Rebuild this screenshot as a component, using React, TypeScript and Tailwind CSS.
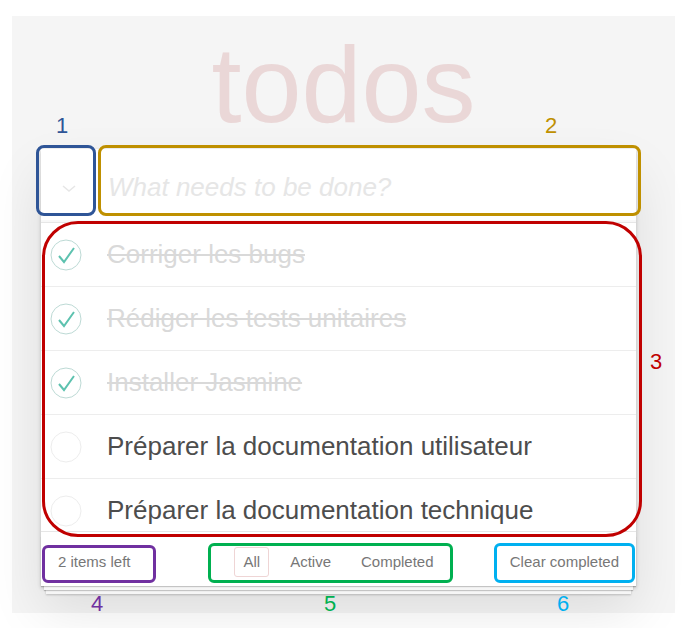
import React from 'react';

const todos = [
  { title: 'Corriger les bugs', done: true },
  { title: 'Rédiger les tests unitaires', done: true },
  { title: 'Installer Jasmine', done: true },
  { title: 'Préparer la documentation utilisateur', done: false },
  { title: 'Préparer la documentation technique', done: false },
];

const CheckCircle = ({ done }: { done: boolean }) => (
  <svg width="32" height="32" viewBox="0 0 32 32" className="shrink-0">
    <circle cx="16" cy="16" r="15" fill="none" stroke={done ? '#bddad5' : '#ededed'} strokeWidth="1" />
    {done && <polyline points="9,17 14,23 24,9" fill="none" stroke="#5dc2af" strokeWidth="2" />}
  </svg>
);

const App = () => {
  return (
    <div className="relative w-[686px] h-[628px] bg-white pt-[16px] pl-[12px] font-['Liberation_Sans',Arial,sans-serif]">
      <div className="w-[663px] h-[597px] bg-[#f5f5f5] pt-[15px]">
        <h1 className="text-center text-[108px] leading-none text-[#ead7d7] font-normal">todos</h1>

        <div className="ml-[29px] mt-[10px] w-[595px] bg-white shadow-[0_2px_4px_0_rgba(0,0,0,0.2),0_25px_50px_0_rgba(0,0,0,0.1)]">
          {/* header */}
          <div className="h-[74px] border-b border-[#e6e6e6] flex items-center pl-[21px] pt-[6px] shadow-[inset_0_-2px_1px_rgba(0,0,0,0.03)]">
            <svg width="14" height="8" viewBox="0 0 14 8" className="shrink-0">
              <polyline points="1,1 7,6 13,1" fill="none" stroke="#e6e6e6" strokeWidth="1.5" />
            </svg>
            <input
              className="flex-1 h-full pl-[32px] pr-4 pb-[3px] text-[26px] outline-none bg-transparent text-[#4d4d4d] placeholder:italic placeholder:text-[#e6e6e6]"
              placeholder="What needs to be done?"
            />
          </div>

          {/* list */}
          <ul>
            {todos.map((t, i) => {
              const last = i === todos.length - 1;
              return (
                <li
                  key={t.title}
                  className={
                    'flex items-start gap-[25px] pl-[9px] pt-[16px] text-[26px] leading-[31px] overflow-hidden ' +
                    (last ? 'h-[52px]' : 'h-[64px] border-b border-[#ededed]')
                  }
                >
                  <CheckCircle done={t.done} />
                  <span className={t.done ? 'text-[#d9d9d9] line-through' : 'text-[#4d4d4d]'}>{t.title}</span>
                </li>
              );
            })}
          </ul>

          {/* footer */}
          <div className="relative h-[55px] border-t border-[#e6e6e6] grid grid-cols-[1fr_auto_1fr] items-center px-[17px] pt-[6px] text-[15px] text-[#777] before:content-[''] before:absolute before:inset-x-0 before:bottom-0 before:h-[50px] before:shadow-[0_1px_1px_rgba(0,0,0,0.2),0_7px_0_-3px_#f6f6f6,0_8px_1px_-3px_rgba(0,0,0,0.2),0_13px_0_-5px_#f6f6f6,0_14px_2px_-5px_rgba(0,0,0,0.2)]">
            <span className="relative">2 items left</span>
            <div className="relative flex gap-[12px]">
              <span className="px-[8px] py-[3px] rounded-[3px] border border-[#efd5d5]">All</span>
              <span className="px-[8px] py-[3px] border border-transparent">Active</span>
              <span className="px-[8px] py-[3px] border border-transparent">Completed</span>
            </div>
            <span className="relative justify-self-end">Clear completed</span>
          </div>
        </div>
      </div>

      {/* annotation boxes */}
      <div className="absolute left-[36px] top-[145px] w-[60px] h-[71px] border-[3px] border-[#2f5597] rounded-[8px]" />
      <div className="absolute left-[98px] top-[145px] w-[543px] h-[71px] border-[3px] border-[#bf9000] rounded-[8px]" />
      <div className="absolute left-[42px] top-[221px] w-[600px] h-[316px] border-[3px] border-[#c00000] rounded-[36px]" />
      <div className="absolute left-[42px] top-[545px] w-[114px] h-[38px] border-[3px] border-[#7030a0] rounded-[6px]" />
      <div className="absolute left-[208px] top-[543px] w-[245px] h-[40px] border-[3px] border-[#00b050] rounded-[6px]" />
      <div className="absolute left-[494px] top-[543px] w-[141px] h-[40px] border-[3px] border-[#00b0f0] rounded-[6px]" />

      {/* annotation numbers */}
      <span className="absolute left-[56px] top-[113px] text-[22px] leading-[26px] text-[#2f5597]">1</span>
      <span className="absolute left-[545px] top-[113px] text-[22px] leading-[26px] text-[#bf9000]">2</span>
      <span className="absolute left-[650px] top-[349px] text-[22px] leading-[26px] text-[#c00000]">3</span>
      <span className="absolute left-[91px] top-[591px] text-[22px] leading-[26px] text-[#7030a0]">4</span>
      <span className="absolute left-[324px] top-[591px] text-[22px] leading-[26px] text-[#00b050]">5</span>
      <span className="absolute left-[557px] top-[591px] text-[22px] leading-[26px] text-[#00b0f0]">6</span>
    </div>
  );
};

export default App;
